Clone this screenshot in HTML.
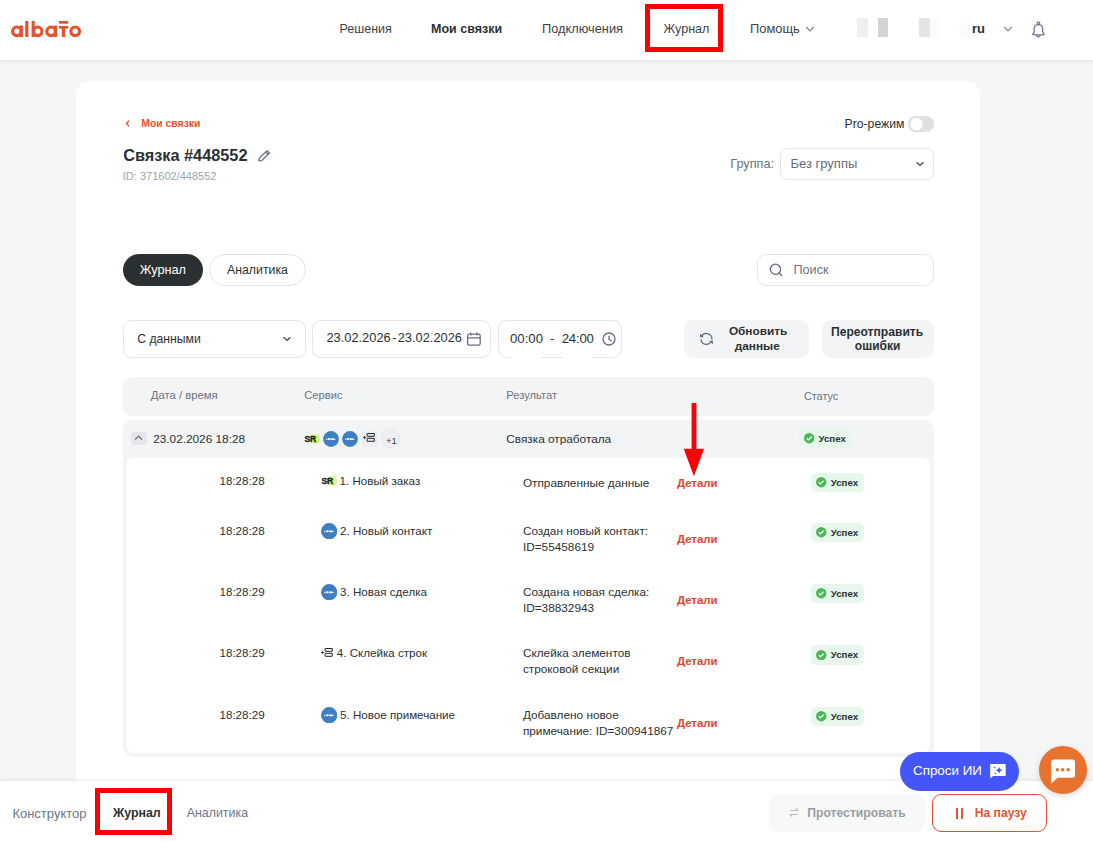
<!DOCTYPE html>
<html><head><meta charset="utf-8"><style>
html,body{margin:0;padding:0;width:1093px;height:842px;overflow:hidden;background:#f4f5f7}
body{position:relative;font-family:"Liberation Sans",sans-serif}
.t{position:absolute;white-space:nowrap;line-height:1}
.b{position:absolute}
</style></head><body>
<div class="b" style="left:0px;top:0px;width:1093px;height:842px;background:#f4f5f7"></div>
<div class="b" style="left:76px;top:81px;width:904px;height:819px;background:#fff;border-radius:14px"></div>
<div class="b" style="left:0px;top:0px;width:1093px;height:60px;background:#fff;box-shadow:0 1px 4px rgba(20,30,40,.10)"></div>
<svg class="b" style="left:0px;top:0px;" width="100" height="60" viewBox="0 0 100 60"><g fill="#e5532d">
<circle cx="16.9" cy="31.3" r="4.3" fill="none" stroke="#e5532d" stroke-width="3.2"/>
<rect x="19.7" y="25.5" width="3.2" height="11.5"/>
<rect x="25.2" y="21" width="3.2" height="16"/>
<rect x="31.6" y="21" width="3.2" height="16"/>
<circle cx="37.7" cy="31.3" r="4.3" fill="none" stroke="#e5532d" stroke-width="3.2"/>
<circle cx="51.1" cy="31.3" r="4.3" fill="none" stroke="#e5532d" stroke-width="3.2"/>
<rect x="54" y="25.5" width="3.2" height="11.5"/>
<rect x="59" y="21" width="9.2" height="2.7"/>
<rect x="59" y="26" width="9.2" height="2.7"/>
<rect x="61.8" y="26" width="3.2" height="11"/>
<circle cx="75.2" cy="31.3" r="4.3" fill="none" stroke="#e5532d" stroke-width="3.2"/>
</g></svg>
<div class="t" style="left:339.5px;top:22.7px;font-size:12.5px;color:#3d4347;">Решения</div>
<div class="t" style="left:431.0px;top:22.7px;font-size:12.5px;color:#2b3133;font-weight:700;">Мои связки</div>
<div class="t" style="left:542.0px;top:22.5px;font-size:12.8px;color:#3d4347;">Подключения</div>
<div class="t" style="left:663.5px;top:22.6px;font-size:12.6px;color:#3d4347;">Журнал</div>
<div class="t" style="left:750.0px;top:23.1px;font-size:12.9px;color:#3d4347;">Помощь</div>
<svg class="b" style="left:804px;top:24px;" width="12" height="10" viewBox="0 0 12 10"><path d="M2.3 3 L6 6.8 L9.7 3" fill="none" stroke="#7a8194" stroke-width="1.2"/></svg>
<div class="b" style="left:857px;top:18px;width:11px;height:19px;background:#efefef"></div>
<div class="b" style="left:878px;top:18px;width:10px;height:19px;background:#d4d4d4"></div>
<div class="b" style="left:919px;top:18px;width:11px;height:19px;background:#e4e4e4"></div>
<div class="b" style="left:930px;top:18px;width:10px;height:19px;background:#fbfbfb"></div>
<div class="b" style="left:961px;top:18px;width:10px;height:19px;background:#fcfcfc"></div>
<div class="t" style="left:972.0px;top:22.0px;font-size:13px;color:#2b3133;font-weight:700;">ru</div>
<svg class="b" style="left:1002px;top:24px;" width="12" height="10" viewBox="0 0 12 10"><path d="M2.3 3 L6 6.8 L9.7 3" fill="none" stroke="#7a8194" stroke-width="1.2"/></svg>
<svg class="b" style="left:1030px;top:20px;" width="17" height="19" viewBox="0 0 17 19"><g fill="none" stroke="#717a8e" stroke-width="1.35" stroke-linejoin="round" stroke-linecap="round"><path d="M8.4 4.6 C5.8 4.6 4.2 6 4.2 8.6 L4.2 11.6 Q4.2 12.8 3.2 13.5 Q2.6 14 2.8 14.4 Q3 14.8 3.6 14.8 L13.2 14.8 Q13.8 14.8 14 14.4 Q14.2 14 13.6 13.5 Q12.6 12.8 12.6 11.6 L12.6 8.6 C12.6 6 11 4.6 8.4 4.6 Z"/><path d="M6.8 15.2 A1.6 1.6 0 0 0 10 15.2"/><circle cx="8.4" cy="3.2" r="1.3"/></g></svg>
<div class="b" style="left:644.5px;top:3.5px;width:78.0px;height:48.0px;border:5px solid #ff0000;box-sizing:border-box"></div>
<svg class="b" style="left:123px;top:117px;" width="10" height="13" viewBox="0 0 10 13"><path d="M6 3.6 L3.6 6.5 L6 9.4" fill="none" stroke="#e5532d" stroke-width="1.4"/></svg>
<div class="t" style="left:141.3px;top:119.0px;font-size:10.4px;color:#e5532d;font-weight:700;">Мои связки</div>
<div class="t" style="left:123.2px;top:146.9px;font-size:16.3px;color:#2b3133;font-weight:700;">Связка #448552</div>
<svg class="b" style="left:256px;top:148.3px;" width="16" height="15.0" viewBox="0 0 16 15.0"><path d="M3 13 L3.4 10.2 L11 2.6 L13.4 5 L5.8 12.6 Z M9.6 4 L12 6.4" fill="none" stroke="#5f687b" stroke-width="1.2" stroke-linejoin="round"/></svg>
<div class="t" style="left:122.8px;top:170.7px;font-size:11px;color:#9ca3af;">ID: 371602/448552</div>
<div class="t" style="left:844.6px;top:118.3px;font-size:12.2px;color:#2b3133;">Pro-режим</div>
<div class="b" style="left:908px;top:116px;width:26px;height:16px;background:#dde0e4;border-radius:8px"></div>
<div class="b" style="left:909.6px;top:117.6px;width:13.0px;height:13.0px;background:#fff;border-radius:50%;box-shadow:0 0.5px 1px rgba(0,0,0,.12)"></div>
<div class="t" style="left:730.3px;top:158.2px;font-size:12.7px;color:#6b7280;">Группа:</div>
<div class="b" style="left:780px;top:148px;width:154px;height:32px;border:1px solid #e3e5ea;border-radius:7px;box-sizing:border-box;background:#fff"></div>
<div class="t" style="left:790.5px;top:157.1px;font-size:13px;color:#656b76;">Без группы</div>
<svg class="b" style="left:913px;top:158px;" width="14" height="12" viewBox="0 0 14 12"><path d="M3.6 4.2 L7 7.4 L10.4 4.2" fill="none" stroke="#3f4550" stroke-width="1.3"/></svg>
<div class="b" style="left:123px;top:254px;width:80px;height:32px;background:#2b3133;border-radius:16px"></div>
<div class="t" style="left:139.7px;top:263.5px;font-size:12.7px;color:#fff;">Журнал</div>
<div class="b" style="left:209px;top:254px;width:97px;height:32px;border:1px solid #e3e5ea;border-radius:16px;box-sizing:border-box"></div>
<div class="t" style="left:227.0px;top:263.9px;font-size:12.3px;color:#2b3133;">Аналитика</div>
<div class="b" style="left:757px;top:254px;width:177px;height:32px;border:1px solid #e3e5ea;border-radius:9px;box-sizing:border-box"></div>
<svg class="b" style="left:767px;top:262px;" width="18" height="16" viewBox="0 0 18 16"><circle cx="8.5" cy="7.3" r="5.1" fill="none" stroke="#5f6777" stroke-width="1.25"/><path d="M12.2 11 L14.9 13.6" stroke="#5f6777" stroke-width="1.3" stroke-linecap="round"/></svg>
<div class="t" style="left:793.4px;top:263.8px;font-size:12.7px;color:#6b7280;">Поиск</div>
<div class="b" style="left:123px;top:320px;width:183px;height:38px;border:1px solid #e3e5ea;border-radius:9px;box-sizing:border-box"></div>
<div class="t" style="left:137.3px;top:333.0px;font-size:12.2px;color:#2b3133;">С данными</div>
<svg class="b" style="left:280px;top:333px;" width="14" height="12" viewBox="0 0 14 12"><path d="M3.6 4.2 L7 7.4 L10.4 4.2" fill="none" stroke="#3f4550" stroke-width="1.3"/></svg>
<div class="b" style="left:312px;top:320px;width:179px;height:38px;border:1px solid #e3e5ea;border-radius:9px;box-sizing:border-box"></div>
<div class="t" style="left:326.4px;top:332.4px;font-size:12.85px;color:#2b3133;">23.02.2026</div>
<div class="t" style="left:392.3px;top:332.4px;font-size:12.9px;color:#2b3133;">-</div>
<div class="t" style="left:397.7px;top:332.4px;font-size:12.85px;color:#2b3133;">23.02.2026</div>
<svg class="b" style="left:466px;top:332px;" width="16" height="14" viewBox="0 0 16 14"><rect x="1.6" y="2.2" width="12.6" height="11" rx="1.8" fill="none" stroke="#656d7d" stroke-width="1.3"/><path d="M1.6 5.8 L14.2 5.8 M4.8 0.6 L4.8 3.4 M11 0.6 L11 3.4" stroke="#656d7d" stroke-width="1.3"/></svg>
<div class="b" style="left:498px;top:320px;width:124px;height:38px;border:1px solid #e3e5ea;border-radius:9px;box-sizing:border-box"></div>
<div class="b" style="left:511px;top:356.5px;width:30.299999999999955px;height:2.0px;background:#fff"></div>
<div class="b" style="left:562.9px;top:356.5px;width:29.600000000000023px;height:2.0px;background:#fff"></div>
<div class="t" style="left:510.0px;top:332.1px;font-size:13.2px;color:#2b3133;">00:00</div>
<div class="t" style="left:550.0px;top:332.3px;font-size:13px;color:#2b3133;">-</div>
<div class="t" style="left:561.7px;top:332.1px;font-size:13.2px;color:#2b3133;letter-spacing:-0.2px">24:00</div>
<svg class="b" style="left:601px;top:332px;" width="16" height="14" viewBox="0 0 16 14"><circle cx="8" cy="7" r="6" fill="none" stroke="#656d7d" stroke-width="1.3"/><path d="M8 3.8 L8 7.2 L10.6 9.2" fill="none" stroke="#656d7d" stroke-width="1.3"/></svg>
<div class="b" style="left:684px;top:320px;width:124.5px;height:37.5px;background:#f3f4f6;border-radius:9px"></div>
<svg class="b" style="left:697px;top:331px;" width="19" height="17" viewBox="0 0 19 17"><g fill="none" stroke="#656d7d" stroke-width="1.3"><path d="M14.9 8.6 A5.5 5.5 0 0 0 4.6 5.4"/><path d="M3.9 8.2 A5.5 5.5 0 0 0 13.6 11.4"/></g><path d="M3 2.6 L3 6.2 L6.8 6.2 Z M15.9 9.8 L12 9.8 L15.9 13.6 Z" fill="#656d7d"/></svg>
<div class="t" style="left:728.9px;top:325.9px;font-size:11.8px;color:#2b3133;font-weight:700;">Обновить</div>
<div class="t" style="left:734.8px;top:340.5px;font-size:11.8px;color:#2b3133;font-weight:700;">данные</div>
<div class="b" style="left:822px;top:320px;width:112px;height:37.5px;background:#f3f4f6;border-radius:9px"></div>
<div class="t" style="left:831.0px;top:325.7px;font-size:12.1px;color:#2b3133;font-weight:700;">Переотправить</div>
<div class="t" style="left:854.8px;top:340.3px;font-size:12px;color:#2b3133;font-weight:700;">ошибки</div>
<div class="b" style="left:123px;top:377px;width:811px;height:39px;background:#f3f4f6;border-radius:9px"></div>
<div class="t" style="left:150.8px;top:390.2px;font-size:11.3px;color:#6b7280;">Дата / время</div>
<div class="t" style="left:304.2px;top:390.3px;font-size:11.2px;color:#6b7280;">Сервис</div>
<div class="t" style="left:506.3px;top:390.3px;font-size:11.2px;color:#6b7280;">Результат</div>
<div class="t" style="left:803.9px;top:390.6px;font-size:10.9px;color:#6b7280;">Статус</div>
<div class="b" style="left:123px;top:420px;width:811px;height:337px;background:#f3f4f6;border-radius:9px"></div>
<div class="b" style="left:126px;top:458px;width:804px;height:295px;background:#fff;border-radius:8px"></div>
<div class="b" style="left:131px;top:432px;width:16px;height:13px;background:#e4e6ea;border-radius:3px"></div>
<svg class="b" style="left:131px;top:432px;" width="16" height="13" viewBox="0 0 16 13"><path d="M4.1 7.7 L7.6 4.1 L11.1 7.7" fill="none" stroke="#5f6673" stroke-width="1.1"/></svg>
<div class="t" style="left:153.2px;top:433.6px;font-size:11.8px;color:#2b3133;">23.02.2026 18:28</div>
<div class="b" style="left:310.0px;top:434.0px;width:10.0px;height:10.0px;border-radius:50%;background:#d6f87c"></div>
<div class="t" style="left:304.4px;top:434.8px;font-size:8.7px;color:#1e1e1e;font-weight:700;letter-spacing:-0.3px;-webkit-text-stroke:0.35px #1e1e1e">SR</div>
<svg class="b" style="left:323.0px;top:431.0px" width="16" height="16" viewBox="0 0 16 16"><circle cx="8" cy="8" r="7.9" fill="#3f7fc1"/><g fill="#fff" opacity="0.92"><rect x="3.1" y="7.5" width="1.3" height="1.6" rx="0.6"/><rect x="4.8" y="7" width="2.6" height="2.1" rx="0.8"/><rect x="7.6" y="7.2" width="3.8" height="1.9" rx="0.5"/><path d="M11.4 7.6 L13 8.6 L11.4 9.1 Z"/></g></svg>
<svg class="b" style="left:342.0px;top:431.0px" width="16" height="16" viewBox="0 0 16 16"><circle cx="8" cy="8" r="7.9" fill="#3f7fc1"/><g fill="#fff" opacity="0.92"><rect x="3.1" y="7.5" width="1.3" height="1.6" rx="0.6"/><rect x="4.8" y="7" width="2.6" height="2.1" rx="0.8"/><rect x="7.6" y="7.2" width="3.8" height="1.9" rx="0.5"/><path d="M11.4 7.6 L13 8.6 L11.4 9.1 Z"/></g></svg>
<div class="b" style="left:362px;top:431px;width:15.5px;height:15.5px;background:#eceef1;border-radius:3px"></div>
<svg class="b" style="left:363.0px;top:433.0px" width="12" height="9" viewBox="0 0 12 9"><path d="M0 4.5 L3.2 4.5 M1.6 2.9 L1.6 6.1" stroke="#1f2326" stroke-width="0.8"/><rect x="4.1" y="0.5" width="7.2" height="2.8" rx="0.25" fill="none" stroke="#1f2326" stroke-width="1"/><rect x="4.1" y="5.3" width="7.2" height="3" rx="0.25" fill="none" stroke="#1f2326" stroke-width="1"/></svg>
<div class="b" style="left:381px;top:429px;width:19px;height:19px;border:1px solid #e3e5e9;border-radius:50%;box-sizing:border-box;background:#eef0f3"></div>
<div class="t" style="left:386.0px;top:435.6px;font-size:9.5px;color:#3b4150;">+1</div>
<div class="t" style="left:506.3px;top:433.6px;font-size:11.8px;color:#2b3133;">Связка отработала</div>
<div class="b" style="left:799px;top:429px;width:53px;height:19px;background:#e7f7eb;border-radius:5px"></div>
<svg class="b" style="left:804.0px;top:433.3px" width="10.4" height="10.4" viewBox="0 0 10 10"><circle cx="5" cy="5" r="5" fill="#4bb85a"/><path d="M2.7 5.1 L4.3 6.6 L7.3 3.6" fill="none" stroke="#fff" stroke-width="1.2"/></svg>
<div class="t" style="left:818.5px;top:433.9px;font-size:9.7px;color:#2b3133;font-weight:700;">Успех</div>
<div class="t" style="left:219.5px;top:474.9px;font-size:11.6px;color:#2b3133;">18:28:28</div>
<div class="b" style="left:327.1px;top:476.0px;width:10.0px;height:10.0px;border-radius:50%;background:#d6f87c"></div>
<div class="t" style="left:321.5px;top:476.8px;font-size:8.7px;color:#1e1e1e;font-weight:700;letter-spacing:-0.3px;-webkit-text-stroke:0.35px #1e1e1e">SR</div>
<div class="t" style="left:339.6px;top:474.9px;font-size:11.6px;color:#2b3133;">1. Новый заказ</div>
<div class="t" style="left:522.9px;top:478.0px;font-size:11.8px;color:#2b3133;">Отправленные данные</div>
<div class="t" style="left:676.9px;top:478.3px;font-size:11.4px;color:#e5432a;font-weight:700;">Детали</div>
<div class="b" style="left:811.3px;top:473px;width:52.5px;height:19px;background:#e7f7eb;border-radius:5px"></div>
<svg class="b" style="left:816.3px;top:477.3px" width="10.4" height="10.4" viewBox="0 0 10 10"><circle cx="5" cy="5" r="5" fill="#4bb85a"/><path d="M2.7 5.1 L4.3 6.6 L7.3 3.6" fill="none" stroke="#fff" stroke-width="1.2"/></svg>
<div class="t" style="left:830.8px;top:477.9px;font-size:9.7px;color:#2b3133;font-weight:700;">Успех</div>
<div class="t" style="left:219.5px;top:524.8px;font-size:11.6px;color:#2b3133;">18:28:28</div>
<svg class="b" style="left:320.8px;top:523.0px" width="16.4" height="16.4" viewBox="0 0 16 16"><circle cx="8" cy="8" r="7.9" fill="#3f7fc1"/><g fill="#fff" opacity="0.92"><rect x="3.1" y="7.5" width="1.3" height="1.6" rx="0.6"/><rect x="4.8" y="7" width="2.6" height="2.1" rx="0.8"/><rect x="7.6" y="7.2" width="3.8" height="1.9" rx="0.5"/><path d="M11.4 7.6 L13 8.6 L11.4 9.1 Z"/></g></svg>
<div class="t" style="left:340.1px;top:524.8px;font-size:11.6px;color:#2b3133;">2. Новый контакт</div>
<div class="t" style="left:522.9px;top:526.4px;font-size:11.8px;color:#2b3133;">Создан новый контакт:</div>
<div class="t" style="left:522.9px;top:542.3px;font-size:11.8px;color:#2b3133;">ID=55458619</div>
<div class="t" style="left:676.9px;top:534.2px;font-size:11.4px;color:#e5432a;font-weight:700;">Детали</div>
<div class="b" style="left:811.3px;top:523px;width:52.5px;height:19px;background:#e7f7eb;border-radius:5px"></div>
<svg class="b" style="left:816.3px;top:527.3px" width="10.4" height="10.4" viewBox="0 0 10 10"><circle cx="5" cy="5" r="5" fill="#4bb85a"/><path d="M2.7 5.1 L4.3 6.6 L7.3 3.6" fill="none" stroke="#fff" stroke-width="1.2"/></svg>
<div class="t" style="left:830.8px;top:527.9px;font-size:9.7px;color:#2b3133;font-weight:700;">Успех</div>
<div class="t" style="left:219.5px;top:585.8px;font-size:11.6px;color:#2b3133;">18:28:29</div>
<svg class="b" style="left:320.8px;top:584.0px" width="16.4" height="16.4" viewBox="0 0 16 16"><circle cx="8" cy="8" r="7.9" fill="#3f7fc1"/><g fill="#fff" opacity="0.92"><rect x="3.1" y="7.5" width="1.3" height="1.6" rx="0.6"/><rect x="4.8" y="7" width="2.6" height="2.1" rx="0.8"/><rect x="7.6" y="7.2" width="3.8" height="1.9" rx="0.5"/><path d="M11.4 7.6 L13 8.6 L11.4 9.1 Z"/></g></svg>
<div class="t" style="left:340.1px;top:585.8px;font-size:11.6px;color:#2b3133;">3. Новая сделка</div>
<div class="t" style="left:522.9px;top:587.4px;font-size:11.8px;color:#2b3133;">Создана новая сделка:</div>
<div class="t" style="left:522.9px;top:603.3px;font-size:11.8px;color:#2b3133;">ID=38832943</div>
<div class="t" style="left:676.9px;top:595.2px;font-size:11.4px;color:#e5432a;font-weight:700;">Детали</div>
<div class="b" style="left:811.3px;top:584px;width:52.5px;height:19px;background:#e7f7eb;border-radius:5px"></div>
<svg class="b" style="left:816.3px;top:588.3px" width="10.4" height="10.4" viewBox="0 0 10 10"><circle cx="5" cy="5" r="5" fill="#4bb85a"/><path d="M2.7 5.1 L4.3 6.6 L7.3 3.6" fill="none" stroke="#fff" stroke-width="1.2"/></svg>
<div class="t" style="left:830.8px;top:588.9px;font-size:9.7px;color:#2b3133;font-weight:700;">Успех</div>
<div class="t" style="left:219.5px;top:646.7px;font-size:11.6px;color:#2b3133;">18:28:29</div>
<svg class="b" style="left:320.9px;top:648.0px" width="12" height="9" viewBox="0 0 12 9"><path d="M0 4.5 L3.2 4.5 M1.6 2.9 L1.6 6.1" stroke="#1f2326" stroke-width="0.8"/><rect x="4.1" y="0.5" width="7.2" height="2.8" rx="0.25" fill="none" stroke="#1f2326" stroke-width="1"/><rect x="4.1" y="5.3" width="7.2" height="3" rx="0.25" fill="none" stroke="#1f2326" stroke-width="1"/></svg>
<div class="t" style="left:336.8px;top:646.7px;font-size:11.6px;color:#2b3133;">4. Склейка строк</div>
<div class="t" style="left:522.9px;top:648.3px;font-size:11.8px;color:#2b3133;">Склейка элементов</div>
<div class="t" style="left:522.9px;top:664.2px;font-size:11.8px;color:#2b3133;">строковой секции</div>
<div class="t" style="left:676.9px;top:655.8px;font-size:11.4px;color:#e5432a;font-weight:700;">Детали</div>
<div class="b" style="left:811.3px;top:645px;width:52.5px;height:20px;background:#e7f7eb;border-radius:5px"></div>
<svg class="b" style="left:816.3px;top:649.8px" width="10.4" height="10.4" viewBox="0 0 10 10"><circle cx="5" cy="5" r="5" fill="#4bb85a"/><path d="M2.7 5.1 L4.3 6.6 L7.3 3.6" fill="none" stroke="#fff" stroke-width="1.2"/></svg>
<div class="t" style="left:830.8px;top:650.4px;font-size:9.7px;color:#2b3133;font-weight:700;">Успех</div>
<div class="t" style="left:219.5px;top:708.6px;font-size:11.6px;color:#2b3133;">18:28:29</div>
<svg class="b" style="left:320.8px;top:706.8px" width="16.4" height="16.4" viewBox="0 0 16 16"><circle cx="8" cy="8" r="7.9" fill="#3f7fc1"/><g fill="#fff" opacity="0.92"><rect x="3.1" y="7.5" width="1.3" height="1.6" rx="0.6"/><rect x="4.8" y="7" width="2.6" height="2.1" rx="0.8"/><rect x="7.6" y="7.2" width="3.8" height="1.9" rx="0.5"/><path d="M11.4 7.6 L13 8.6 L11.4 9.1 Z"/></g></svg>
<div class="t" style="left:340.1px;top:708.6px;font-size:11.6px;color:#2b3133;">5. Новое примечание</div>
<div class="t" style="left:522.9px;top:710.0px;font-size:11.8px;color:#2b3133;">Добавлено новое</div>
<div class="t" style="left:522.9px;top:725.9px;font-size:11.8px;color:#2b3133;">примечание: ID=300941867</div>
<div class="t" style="left:676.9px;top:717.7px;font-size:11.4px;color:#e5432a;font-weight:700;">Детали</div>
<div class="b" style="left:811.3px;top:707px;width:52.5px;height:19px;background:#e7f7eb;border-radius:5px"></div>
<svg class="b" style="left:816.3px;top:711.3px" width="10.4" height="10.4" viewBox="0 0 10 10"><circle cx="5" cy="5" r="5" fill="#4bb85a"/><path d="M2.7 5.1 L4.3 6.6 L7.3 3.6" fill="none" stroke="#fff" stroke-width="1.2"/></svg>
<div class="t" style="left:830.8px;top:711.9px;font-size:9.7px;color:#2b3133;font-weight:700;">Успех</div>
<svg class="b" style="left:680px;top:400px;" width="30" height="80" viewBox="0 0 30 80"><rect x="11.6" y="3" width="4.8" height="46" fill="#ff0000"/><path d="M3.7 48.7 L24 48.7 L13.9 76.2 Z" fill="#ff0000"/></svg>
<div class="b" style="left:0px;top:781px;width:1093px;height:61px;background:#fff;box-shadow:0 -1px 4px rgba(20,30,40,.08)"></div>
<div class="t" style="left:12.4px;top:806.6px;font-size:13px;color:#6b7589;">Конструктор</div>
<div class="t" style="left:113.0px;top:807.1px;font-size:12.4px;color:#2b3133;font-weight:700;">Журнал</div>
<div class="t" style="left:186.7px;top:807.1px;font-size:12.4px;color:#6b7589;">Аналитика</div>
<div class="b" style="left:94.7px;top:787.6px;width:77.8px;height:47.60000000000002px;border:5.2px solid #ff0000;box-sizing:border-box"></div>
<div class="b" style="left:769px;top:794px;width:155.5px;height:37.5px;background:#f7f8f8;border-radius:9px"></div>
<svg class="b" style="left:787px;top:806px;" width="14" height="13" viewBox="0 0 14 13"><path d="M3 4.5 L11 4.5 M9 2.5 L11 4.5 M11 8.5 L3 8.5 M5 10.5 L3 8.5" fill="none" stroke="#b6bac1" stroke-width="1.1"/></svg>
<div class="t" style="left:807.2px;top:807.3px;font-size:12.2px;color:#9b9ea3;font-weight:700;">Протестировать</div>
<div class="b" style="left:932px;top:794px;width:115px;height:37.5px;border:1px solid #e5532d;border-radius:9px;box-sizing:border-box"></div>
<div class="b" style="left:956px;top:807.6px;width:2.2000000000000455px;height:11.0px;background:#e5532d;border-radius:0.5px"></div>
<div class="b" style="left:961px;top:807.6px;width:2.2000000000000455px;height:11.0px;background:#e5532d;border-radius:0.5px"></div>
<div class="t" style="left:974.8px;top:807.4px;font-size:12.1px;color:#e5532d;font-weight:700;">На паузу</div>
<div class="b" style="left:900px;top:752px;width:119px;height:39px;background:#4556f9;border-radius:20px"></div>
<div class="t" style="left:913.0px;top:763.9px;font-size:13.4px;color:#fff;">Спроси ИИ</div>
<svg class="b" style="left:989px;top:763px;" width="19" height="17" viewBox="0 0 19 17"><path d="M1.6 0.9 L16.3 0.9 Q16.7 0.9 16.7 1.3 L16.7 12.6 Q16.7 13 16.3 13 L4.2 13 L1.2 15.2 L1.2 1.3 Q1.2 0.9 1.6 0.9 Z" fill="#fff"/><path d="M10.1 3.9 Q10.6 6.8 13.5 7.3 Q10.6 7.8 10.1 10.7 Q9.6 7.8 6.7 7.3 Q9.6 6.8 10.1 3.9 Z" fill="#4556f9"/><path d="M5.6 3.3 Q5.8 4.3 6.8 4.5 Q5.8 4.7 5.6 5.7 Q5.4 4.7 4.4 4.5 Q5.4 4.3 5.6 3.3 Z" fill="#4556f9"/><circle cx="6.3" cy="10.5" r="0.8" fill="#4556f9"/></svg>
<div class="b" style="left:1039px;top:746px;width:48px;height:48px;background:#e8732f;border-radius:50%;box-shadow:0 2px 6px rgba(0,0,0,.15)"></div>
<svg class="b" style="left:1049px;top:757px;" width="28" height="28" viewBox="0 0 28 28"><path d="M4.8 2.6 L23.5 2.6 Q26 2.6 26 5.1 L26 18.3 Q26 20.8 23.5 20.8 L8.5 20.8 L2.3 26.4 L2.3 5.1 Q2.3 2.6 4.8 2.6 Z" fill="#fff"/><circle cx="8.3" cy="12.8" r="1.75" fill="#e8732f"/><circle cx="13.7" cy="12.8" r="1.75" fill="#e8732f"/><circle cx="19.1" cy="12.8" r="1.75" fill="#e8732f"/></svg>
</body></html>
